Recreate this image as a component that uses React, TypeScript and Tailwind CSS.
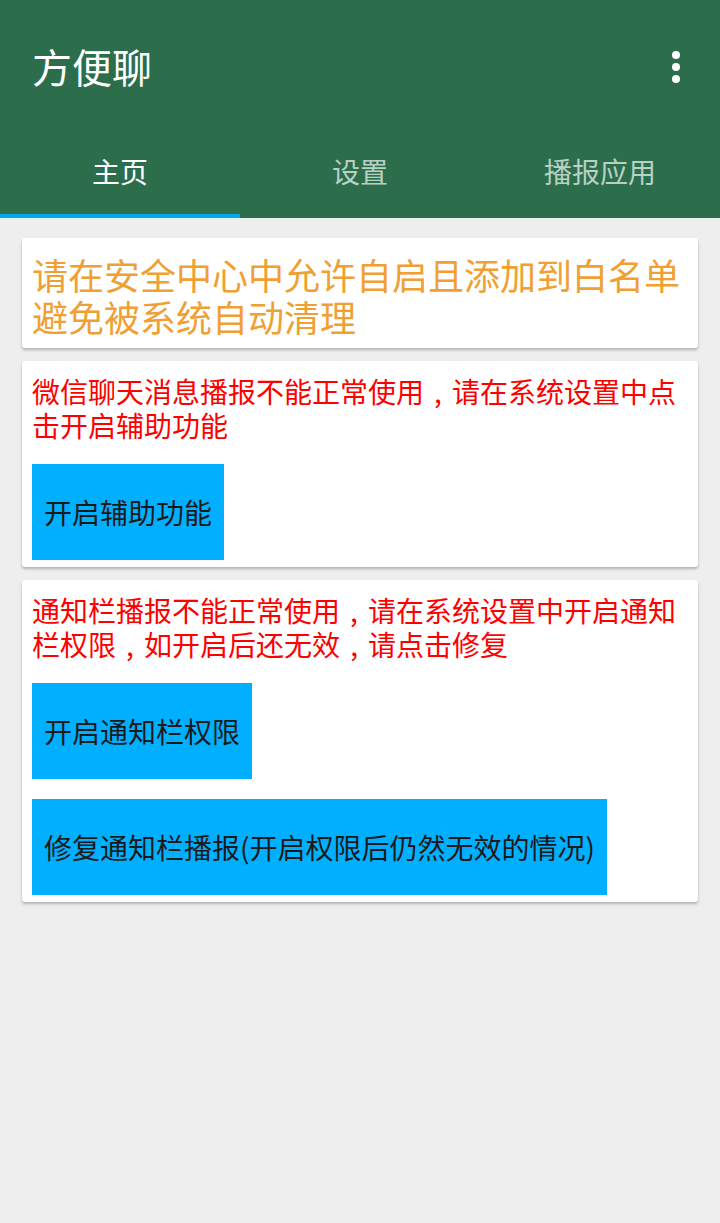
const font = { fontFamily: '"Noto Sans CJK SC", "Noto Sans", sans-serif' };

const tabs = ["主页", "设置", "播报应用"];

// the reference draws full-width commas centred in their cell
function Comma() {
  return <span className="inline-block w-[1em] text-center">,</span>;
}

function ActionButton({ label }: { label: string }) {
  return (
    <button className="flex h-[96px] items-center self-start bg-[#00b0ff] px-[12px] text-[28px] leading-none text-[#1a1a1a]">
      {label}
    </button>
  );
}

export default function App() {
  return (
    <div className="min-h-[1223px] w-[720px] bg-[#eeeeee]" style={font}>
      {/* App bar */}
      <header className="bg-[#2c6d4c]">
        <div className="flex h-[134px] items-center justify-between pl-[32px] pr-[40px]">
          <h1 className="pb-[2px] text-[40px] leading-none text-white">方便聊</h1>
          <div className="flex flex-col gap-[4px]">
            <span className="h-[8px] w-[8px] rounded-full bg-white" />
            <span className="h-[8px] w-[8px] rounded-full bg-white" />
            <span className="h-[8px] w-[8px] rounded-full bg-white" />
          </div>
        </div>
        <nav className="grid h-[84px] grid-cols-3">
          {tabs.map((tab, i) => (
            <div key={tab} className="relative flex items-center justify-center pb-[11px]">
              <span
                className={
                  i === 0
                    ? "text-[28px] leading-none text-white"
                    : "text-[28px] leading-none text-[#b9d1c4]"
                }
              >
                {tab}
              </span>
              {i === 0 && <span className="absolute bottom-0 left-0 h-[4px] w-full bg-[#00aaee]" />}
            </div>
          ))}
        </nav>
      </header>

      {/* Content */}
      <main className="flex flex-col gap-[13px] px-[22px] pt-[20px]">
        <section className="rounded-[3px] bg-white px-[10px] pb-[11px] pt-[15px] shadow-[0_2px_3px_rgba(0,0,0,0.25)]">
          <p className="text-[36px] leading-[42px] text-[#f0a032]">
            请在安全中心中允许自启且添加到白名单避免被系统自动清理
          </p>
        </section>

        <section className="flex flex-col gap-[22px] rounded-[3px] bg-white px-[10px] pb-[7px] pt-[13px] shadow-[0_2px_3px_rgba(0,0,0,0.25)]">
          <p className="text-[28px] leading-[34px] text-[#ff0000]">
            微信聊天消息播报不能正常使用<Comma />请在系统设置中点击开启辅助功能
          </p>
          <ActionButton label="开启辅助功能" />
        </section>

        <section className="flex flex-col gap-[20px] rounded-[3px] bg-white px-[10px] pb-[7px] pt-[13px] shadow-[0_2px_3px_rgba(0,0,0,0.25)]">
          <p className="mb-[2px] text-[28px] leading-[34px] text-[#ff0000]">
            通知栏播报不能正常使用<Comma />请在系统设置中开启通知栏权限<Comma />如开启后还无效<Comma />请点击修复
          </p>
          <ActionButton label="开启通知栏权限" />
          <ActionButton label="修复通知栏播报(开启权限后仍然无效的情况)" />
        </section>
      </main>
    </div>
  );
}
